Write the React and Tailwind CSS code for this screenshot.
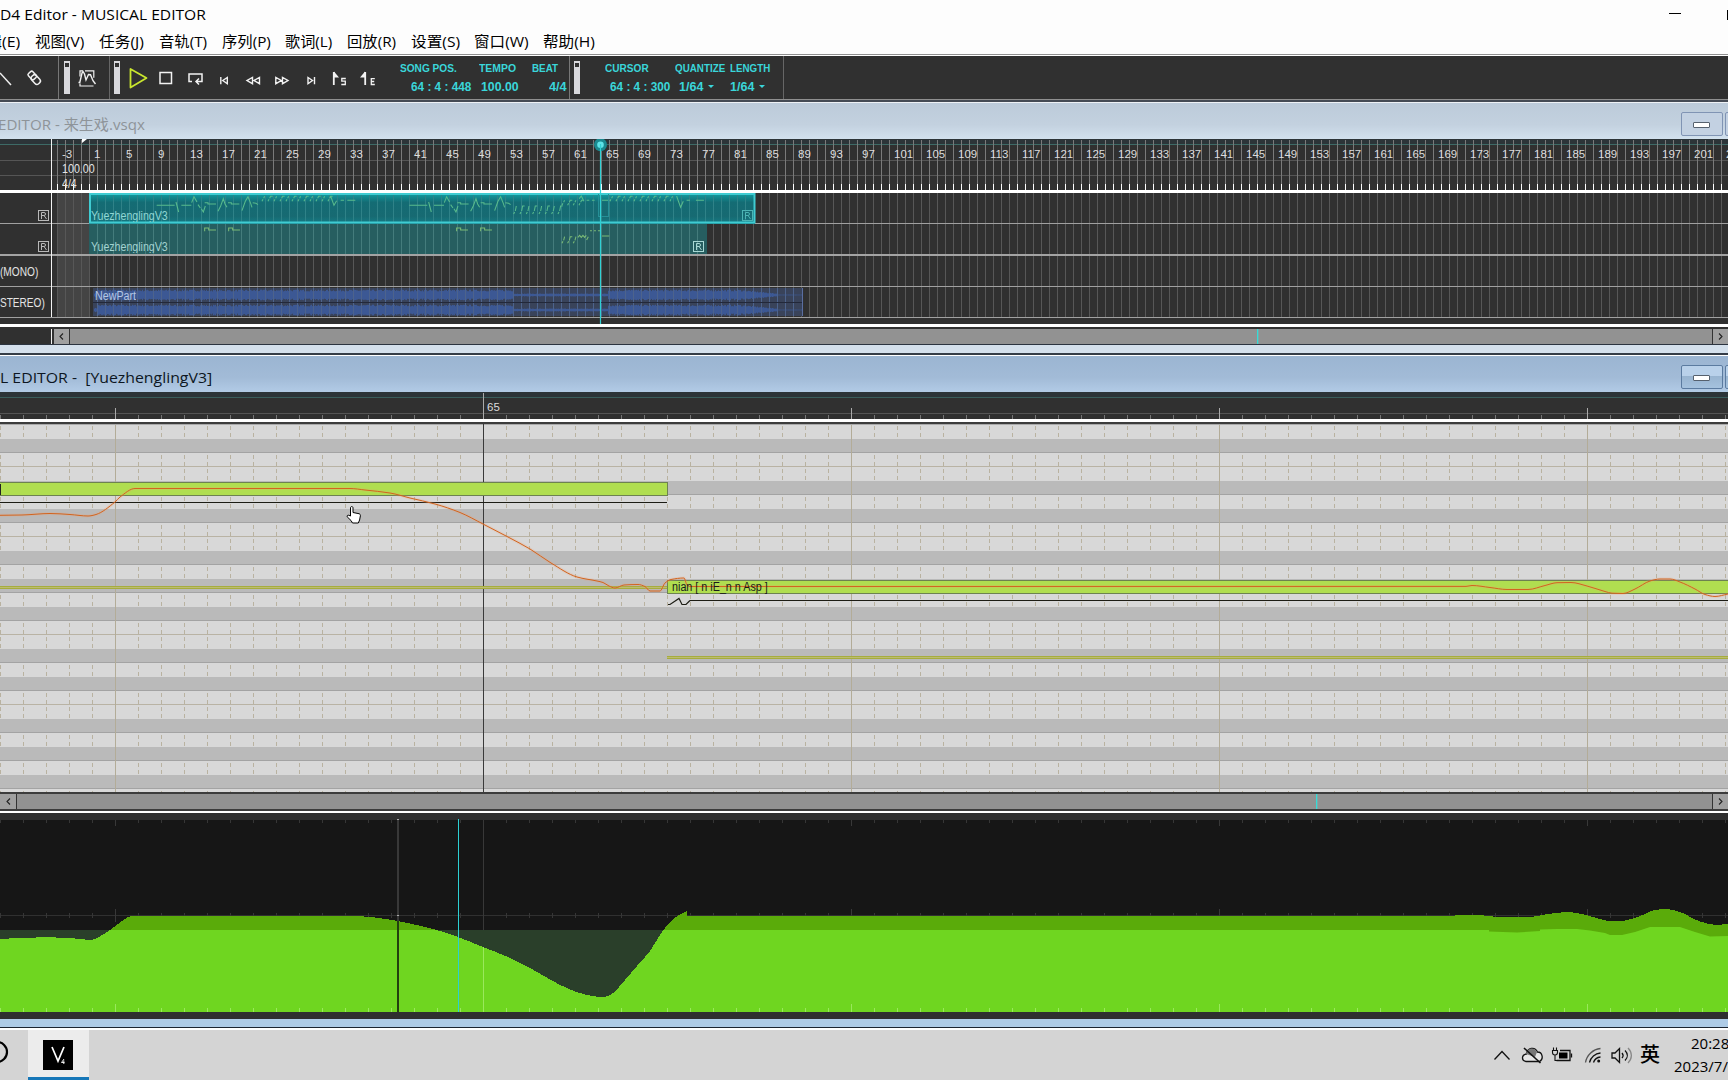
import React, { useLayoutEffect, useRef, useState } from "react";

/* Text squeezed or stretched horizontally to a given width. */
function Fit({ w, className = "", children }) {
  const ref = useRef(null);
  const [k, setK] = useState(1);
  useLayoutEffect(() => {
    setK(w / ref.current.offsetWidth);
  }, [w]);
  return (
    <span className={"block shrink-0 whitespace-nowrap " + className} style={{ width: w }}>
      <span ref={ref} className="inline-block origin-left" style={{ transform: `scaleX(${k})` }}>
        {children}
      </span>
    </span>
  );
}

const range = (a, b, s) => {
  const out = [];
  for (let i = a; i < b; i += s) out.push(i);
  return out;
};

/* Monotone cubic curve through a flat list x0,y0,x1,y1,... */
function curve(flat) {
  const p = [];
  for (let i = 0; i < flat.length; i += 2) p.push([flat[i], flat[i + 1]]);
  const s = p.slice(1).map((q, i) => (q[1] - p[i][1]) / (q[0] - p[i][0]));
  const m = p.map((_, i) => {
    if (i === 0) return s[0];
    if (i === p.length - 1) return s[i - 1];
    if (s[i - 1] * s[i] <= 0) return 0;
    return (2 * s[i - 1] * s[i]) / (s[i - 1] + s[i]);
  });
  let d = `${p[0][0]} ${p[0][1]}`;
  for (let i = 1; i < p.length; i++) {
    const h = (p[i][0] - p[i - 1][0]) / 3;
    d += `C${p[i - 1][0] + h} ${p[i - 1][1] + m[i - 1] * h} ${p[i][0] - h} ${p[i][1] - m[i] * h} ${p[i][0]} ${p[i][1]}`;
  }
  return d;
}

const UI = "font-['Open_Sans','Noto_Sans_CJK_SC',sans-serif]";
const SANS = "font-['Liberation_Sans','Noto_Sans_CJK_SC',sans-serif]";

const MENUS = [
  ["视图(V)", 49.5, 64],
  ["任务(J)", 45, 60],
  ["音轨(T)", 48, 63],
  ["序列(P)", 49, 63],
  ["歌词(L)", 47.5, 62],
  ["回放(R)", 49, 64],
  ["设置(S)", 49, 63],
  ["窗口(W)", 55, 69],
  ["帮助(H)", 52, 60],
];

function TitleBar() {
  return (
    <header className={"h-[56px] shrink-0 bg-[#fdfdfd] border-b border-white text-black " + UI}>
      <div className="h-[55px] border-b border-[#8f8f8f] flex flex-col">
        <div className="h-[30px] flex items-center justify-between text-[15px] leading-[28px]">
          <Fit w={206} className="pb-[2px]">D4 Editor - MUSICAL EDITOR</Fit>
          <div className="flex items-center">
            <span className="w-3 h-px bg-black mt-[-3px]" />
            <span className="w-px h-2.5 bg-black ml-[46px]" />
          </div>
        </div>
        <nav className="flex text-[15px] leading-[22px]">
          <div className="w-[35px] flex overflow-hidden">
            <span className="w-[20px] flex justify-end overflow-hidden">
              <Fit w={34}>辑(E)</Fit>
            </span>
          </div>
          {MENUS.map(([t, w, cell]) => (
            <div key={t} style={{ width: cell }}>
              <Fit w={w}>{t}</Fit>
            </div>
          ))}
        </nav>
      </div>
    </header>
  );
}

function Grip() {
  return (
    <div className="w-[6px] h-[33px] bg-[#d8d8dc] pt-[2px] flex justify-center shrink-0">
      <span className="w-1 h-1 bg-[#303030]" />
    </div>
  );
}

function Readout({ label, lw, value, vw, pad, width, arrow }) {
  return (
    <div className="h-[34px] flex flex-col justify-between shrink-0" style={{ width }}>
      <Fit w={lw} className="text-[11px] leading-[14px]">{label}</Fit>
      <div className="flex items-center gap-[5px] pb-[1px]" style={{ paddingLeft: pad }}>
        <Fit w={vw} className="text-[12px] leading-[14px]">{value}</Fit>
        {arrow && (
          <svg width="6" height="3" viewBox="0 0 6 3" fill="#3ad6da"><path d="M0 0h6L3 3z" /></svg>
        )}
      </div>
    </div>
  );
}

function Toolbar() {
  return (
    <div className="h-[43px] shrink-0 bg-[#303030] flex items-center">
      <svg className="shrink-0" width="58" height="43" viewBox="0 56 58 43" fill="none" stroke="#f0f0f0" strokeWidth="1.5">
        <path d="M0 73L11 85" />
        <rect x="-3.6" y="-3" width="8" height="6" rx="1.6" transform="translate(32 75.2) rotate(48)" />
        <rect x="-4.2" y="-3.2" width="10" height="6.4" rx="2.6" transform="translate(35.2 79) rotate(48)" />
      </svg>
      <span className="w-px h-full bg-[#777]" />
      <div className="w-[5px]" />
      <Grip />
      <svg className="shrink-0" width="39" height="43" viewBox="70 56 39 43" fill="none" stroke="#f0f0f0" strokeWidth="1.200">
        <path d="M80 76.500V70.800h3M85 70.800h8.800v7M80 83.500v2.500h13.500" />
        <path d="M78.500 82.500h1.300L82 73l1-1.500 1.500 2.500L86 80l2.500-5.500 2 .2 2.500 6 2.500 3.300" strokeWidth="1.400" />
      </svg>
      <span className="w-px h-full bg-[#666]" />
      <div className="w-[4px]" />
      <Grip />
      <svg className="shrink-0" width="280" height="43" viewBox="120 56 280 43" fill="none" stroke="#f2f2f2" strokeWidth="1.5">
        <path d="M130.500 69v18.500L146.500 78z" stroke="#c9e62e" strokeWidth="1.8" strokeLinejoin="round" />
        <rect x="160" y="72.500" width="11.500" height="11" />
        <path d="M192 81.500h-3v-7.500h13v7.500h-6M199 78.500l-3 3 3 3" />
        <g strokeWidth="1.400">
          <path d="M220.800 77v7.200M227.300 77.500v6.200L222.800 80.500z" />
          <path d="M252.500 77.500v6.200L247 80.500zM259.500 77.500v6.200L254 80.500z" />
          <path d="M275.800 77.500v6.200L281.300 80.500zM282.500 77.500v6.200L288 80.500z" />
          <path d="M314.500 77v7.200M308 77.500v6.200L312.500 80.500z" />
        </g>
        <path d="M333.800 72v13" strokeWidth="1.8" />
        <path d="M334 71.500l5 6h-5z" fill="#f2f2f2" stroke="none" />
        <path d="M345.800 78.500h-4v2.700h3.500v3.300h-4" strokeWidth="1.300" />
        <path d="M365.200 72v13" strokeWidth="1.8" />
        <path d="M365 71.500l-5 6h5z" fill="#f2f2f2" stroke="none" />
        <path d="M374.800 78.700h-3.500v5.800h3.500M371 81.500h3.200" strokeWidth="1.300" />
      </svg>
      <div className={"h-full flex items-center font-bold text-[#3ad6da] " + SANS}>
        <Readout label="SONG POS." lw={57} value="64 : 4 : 448" vw={60} pad={11} width={79} />
        <Readout label="TEMPO" lw={37} value="100.00" vw={38} pad={2} width={53} />
        <Readout label="BEAT" lw={26} value="4/4" vw={18} pad={17} width={37} />
        <span className="w-px h-full bg-[#777]" />
        <div className="w-[4px]" />
        <Grip />
        <div className="w-[25px]" />
        <Readout label="CURSOR" lw={44} value="64 : 4 : 300" vw={60} pad={5} width={70} />
        <Readout label="QUANTIZE" lw={50} value="1/64" vw={24} pad={4} width={55} arrow />
        <Readout label="LENGTH" lw={40} value="1/64" vw={24} pad={-1} width={53} arrow />
        <span className="w-px h-full bg-[#666]" />
      </div>
    </div>
  );
}

function WindowButtons({ active }) {
  const box = active
    ? "border-[#5b7ba0] bg-[linear-gradient(#b9d1ea_0_45%,#98b4d0_45%,#a5c2de)]"
    : "border-[#8094b4] bg-[#c3d1e2]";
  return (
    <div className="flex gap-[2px] overflow-hidden w-[47px]">
      <span className={"w-[42px] h-[24px] rounded-[2px] border shrink-0 flex items-center justify-center pt-[2px] pr-[2px] " + box}>
        <span className="w-[17px] h-[6px] rounded-[1px] border border-[#56616e] bg-white" />
      </span>
      <span className={"w-[42px] h-[24px] rounded-[2px] border shrink-0 " + box} />
    </div>
  );
}

function RBox({ color }) {
  return (
    <svg width="11" height="11" viewBox="0 0 11 11" fill="none" stroke={color} className="block shrink-0">
      <rect x=".5" y=".5" width="10" height="10" />
      <path d="M3.500 9V2.500h2.500a1.500 1.500 0 0 1 0 3H3.500M6 5.500L8.500 9" />
    </svg>
  );
}

/* Note strokes of the vocal parts, in thirds of a pixel. */
const phrase = (o) =>
  `M${o + 200} 46h54M${o + 258} 36l8 30M${o + 274} 46h30M${o + 305} 38l7-18 9 16M${o + 324} 44l7 10M${o + 334} 56l6 10 6-18M${o + 344} 38h10v4h24M${o + 384} 64l8-16 8-22 5 16 6 10M${o + 414} 38h10v4h24M${o + 456} 62l10-28 8-14 8 20 4 12M${o + 488} 38l10 2 6 4`;
const slants = (a, b, step, y0, y1) =>
  range(a, b, step).map((x, i) => `M${x} ${y0}l3 -6M${x + 5} ${y0 - 9}l3 ${-(y0 - y1 - 11)}${i % 2 ? "h6" : ""}`).join("");
const PART1 =
  phrase(0) + phrase(758) +
  slants(516, 720, 18, 34, 17) + "M722 18l10 28 8-14M752 31h10M772 31h24" +
  slants(1271, 1410, 19, 72, 46) + slants(1416, 1470, 17, 46, 29) + "M1468 26l6-8 8 16M1490 31h8M1506 31h8M1536 31h22" +
  slants(1560, 1756, 18, 34, 17) + "M1760 18l12 34 8-18M1790 31h10M1818 31h24";
const PART2 =
  "M344 124v-10h12v6h22M416 124v-10h12v6h22M1100 124v-10h12v6h22M1172 124v-10h12v6h22" +
  slants(1416, 1464, 17, 160, 138) + "M1464 142l5-6 5 6 5-6 5 6 5-6M1490 150l5-10M1500 122h6M1512 122h6M1524 122h8M1536 138h22";

function wavePath(cy) {
  let seed = 7;
  const rnd = () => (seed = (seed * 16807) % 2147483647) / 2147483647;
  let d = "";
  for (let x = 94; x < 802; x++) {
    let a = 5;
    if (x < 98) a = 2;
    else if (x > 512 && x < 608) a = 1.4;
    else if (x > 777) a = 0.4;
    else if (x > 740) a = 5 - ((x - 740) / 37) * 3.6;
    const h = a * (0.72 + rnd() * 0.35);
    d += `M${x + 0.5} ${cy - h}v${2 * h}`;
  }
  return d;
}

function BarNumbers() {
  const bars = [-3];
  for (let b = 1; b <= 205; b += 4) bars.push(b);
  return (
    <div className={"h-[21px] flex pl-[10px] pt-[8px] text-[11.5px] leading-[14px] text-[#dcdcdc] overflow-hidden " + SANS}>
      {bars.map((b) => (
        <span key={b} className="shrink-0 w-[32px]">
          {b}
        </span>
      ))}
    </div>
  );
}

function Arrange() {
  const ticks = range(57, 1728, 8);
  return (
    <section className="relative h-[185px] shrink-0 bg-[#303030] overflow-hidden">
      <svg className="absolute inset-0" width="1728" height="185" viewBox="0 139 1728 185" shapeRendering="crispEdges">
        <rect x="0" y="139" width="1728" height="5" fill="#2c3438" />
        <rect x="0" y="144" width="1728" height="1" fill="#3d6a66" />
        <path d="M0 160.500H1728M0 175.500H1728" stroke="#555" />
        <path d={ticks.map((x) => `M${x + 0.5} 140V190`).join("")} stroke="#7a7a7a" />
        <path d={ticks.map((x) => `M${x + 0.5} 184V190`).join("")} stroke="#fff" />
        <path d="M82 139h5l-5 4z" fill="#fff" shapeRendering="auto" />
        <rect x="57" y="193" width="32" height="124" fill="#444" />
        <path d={ticks.map((x) => `M${x + 0.5} 193V317`).join("")} stroke="#575757" />
        <path d="M0 223.500H1728M0 286.500H1728M0 317.500H1728" stroke="#a0a0a0" />
        <rect x="0" y="254" width="1728" height="2" fill="#a3a3a3" />
        <defs>
          <linearGradient id="sel" x1="0" y1="0" x2="0" y2="1">
            <stop offset="0" stopColor="#12a0a4" />
            <stop offset=".3" stopColor="#146c74" />
            <stop offset=".75" stopColor="#176a72" />
            <stop offset="1" stopColor="#147c86" />
          </linearGradient>
        </defs>
        <rect x="89" y="193" width="666" height="31" fill="url(#sel)" />
        <rect x="89" y="224" width="618" height="30" fill="#265e60" />
        <path d={range(97, 753, 8).map((x) => `M${x + 0.5} 195V222`).join("")} stroke="#2f8288" />
        <path d={range(97, 705, 8).map((x) => `M${x + 0.5} 224V254`).join("")} stroke="#447c7c" />
        <rect x="90" y="194" width="664.500" height="28.500" fill="none" stroke="#40ccd2" strokeWidth="2" shapeRendering="auto" />
        <rect x="93" y="288" width="710" height="28" fill="#39435a" />
        <path d={wavePath(295) + wavePath(310)} stroke="#3c5894" shapeRendering="auto" />
        <path d={range(97, 800, 8).map((x) => `M${x + 0.5} 288V316`).join("")} stroke="#4d638c" />
        <path d="M93 302.500H802" stroke="#22283a" />
        <path d="M802.500 288V316" stroke="#5a6ea0" />
        <g transform="translate(90 190) scale(.3333)" fill="none" strokeWidth="3.200" shapeRendering="auto">
          <path d={PART1} stroke="#58ba8c" />
          <path d={PART2} stroke="#7aba76" />
        </g>
        <path d="M598.500 194v22h10v-22" fill="none" stroke="#268f96" />
      </svg>
      <div className="relative h-full flex text-[#e4e4e4]">
        <div className={"w-[52px] border-r border-[#f2f2f2] h-[178px] flex flex-col text-[12px] leading-[34px] shrink-0 " + SANS}>
          <div className="h-[54px]" />
          <div className="h-[31px] pl-[38px] pt-[17px]"><RBox color="#b8b8b8" /></div>
          <div className="h-[31px] pl-[38px] pt-[17px]"><RBox color="#b8b8b8" /></div>
          <div className="h-[31px]"><Fit w={38}>(MONO)</Fit></div>
          <div className="h-[31px]"><Fit w={44.5}>STEREO)</Fit></div>
        </div>
        <div className={"grow min-w-0 text-[12px] " + SANS}>
          <BarNumbers />
          <Fit w={33} className="h-[15px] leading-[18px] ml-[10px]">100.00</Fit>
          <Fit w={15} className="h-[15px] leading-[18px] ml-[10px] overflow-hidden">4/4</Fit>
          <div className="h-[3px] bg-white -ml-[52px]" />
          <div className="h-[30px] pl-[39px] pt-[14px] flex text-[#8fd6d4] w-[701px]">
            <Fit w={77} className="h-[15px] leading-[18px] overflow-hidden">YuezhenglingV3</Fit>
            <div className="ml-auto mt-[3px]"><RBox color="#4cb4b4" /></div>
          </div>
          <div className="h-[31px] pl-[39px] pt-[15px] flex text-[#a3d2d0] w-[655px]">
            <Fit w={77} className="h-[15px] leading-[18px] overflow-hidden">YuezhenglingV3</Fit>
            <div className="ml-auto mt-[3px] mr-[3px]"><RBox color="#a8d8d4" /></div>
          </div>
          <div className="h-[31px]" />
          <Fit w={41} className="ml-[43px] mt-[3px] leading-[16px] text-[#b4c6e4]">NewPart</Fit>
        </div>
      </div>
      <svg className="absolute left-[590px] top-0" width="22" height="185" viewBox="590 139 22 185">
        <circle cx="600.500" cy="144.700" r="6.500" fill="#1b8a90" />
        <circle cx="600.500" cy="144.700" r="3.300" fill="#5fe4e8" />
        <path d="M600.500 144V324" stroke="#2fd0d4" strokeWidth="1.200" />
      </svg>
    </section>
  );
}

function Arrow({ d }) {
  return (
    <svg width="5" height="7" viewBox="0 0 5 7" fill="none" stroke="#222" strokeWidth="1.100"><path d={d} /></svg>
  );
}
const LEFT = "M4 .5L1 3.500L4 6.500";
const RIGHT = "M1 .5L4 3.500L1 6.500";

function ScrollBar({ leftW, before, cls }) {
  return (
    <div className={"h-[15px] flex grow " + cls}>
      <span className="bg-[#a0a0a0] border-r border-[#333] flex items-center justify-center shrink-0" style={{ width: leftW }}>
        <Arrow d={LEFT} />
      </span>
      <span className="bg-[#929292] shrink-0" style={{ width: before }} />
      <span className="w-px bg-[#35dcd8] shrink-0" />
      <span className="w-px bg-[#78aaa8] shrink-0" />
      <span className="bg-[#929292] grow" />
      <span className="w-[16px] bg-[#a0a0a0] border-l border-[#333] flex items-center justify-center shrink-0">
        <Arrow d={RIGHT} />
      </span>
    </div>
  );
}

const PITCH =
  "M" +
  curve([0, 515.3, 22, 515, 50, 513.5, 70, 514.5, 88, 516, 96, 514.5, 115, 502, 120, 497, 135, 488.5, 350, 488.5, 365, 490, 390, 493, 410, 498, 435, 504, 460, 512.5, 483, 524, 508, 537, 530, 549, 551, 563, 577, 577, 597, 581, 603, 582.5, 609, 586, 615, 588, 624, 585, 638, 584.5, 645, 586.5, 650, 591, 660, 591, 665, 583, 671, 579.5, 684, 578, 687, 585, 690, 586.5, 1466, 586.4, 1472, 585.5, 1490, 587.5, 1507, 589.5, 1528, 589.5, 1545, 585.5, 1557, 582.7, 1571, 582.5, 1587, 586, 1605, 591.5, 1612, 593.2, 1623, 593.5, 1635, 589, 1650, 581, 1660, 579, 1670, 579, 1680, 582, 1695, 589, 1705, 594.5, 1715, 596.5, 1728, 594]);

const ROWS = "DLLDLDLLDLDLDLLDLDLLDLDLDL".split("");

function PianoRoll() {
  const minor = range(0, 1728, 23).filter((x) => (x - 115) % 368 !== 0);
  const majors = [115, 851, 1219, 1587];
  return (
    <>
      <div className={"relative h-[27px] shrink-0 bg-[#303030] overflow-hidden " + SANS}>
        <svg className="absolute inset-0" width="1728" height="27" viewBox="0 392 1728 27" shapeRendering="crispEdges">
          <rect x="0" y="392" width="1728" height="5" fill="#2c3438" />
          <path d="M0 397.500H1728" stroke="#3a5e5c" />
          <path d="M0 413.500H1728" stroke="#555" />
          <path d={minor.map((x) => `M${x + 0.5} 415V419`).join("")} stroke="#777" />
          <path d={majors.map((x) => `M${x + 0.5} 408V419`).join("") + "M483.500 393V419"} stroke="#aaa" />
        </svg>
        <span className="relative block pl-[487px] pt-[8px] text-[11.5px] leading-[14px] text-[#dcdcdc]">65</span>
      </div>
      <div className="h-[3px] bg-white shrink-0" />
      <div className="h-[2px] bg-[#3c3c3c] shrink-0" />
      <section className="relative h-[368px] shrink-0 bg-[#d8d8d8] overflow-hidden">
        <div className="h-[15px] border-t border-[#aaa]" />
        {ROWS.map((r, i) => (
          <div
            key={i}
            className={
              r === "D"
                ? "h-[14px] bg-[#bababa] border-b border-[#a3a3a3]"
                : "h-[14px] bg-[#d8d8d8] " + (ROWS[i + 1] === "L" ? "border-b border-[#b9b3a4]" : "")
            }
          />
        ))}
        <svg className="absolute inset-0" width="1728" height="368" viewBox="0 424 1728 368" shapeRendering="crispEdges">
          {ROWS.map((r, i) =>
            r === "L" ? (
              <path key={i} d={minor.map((x) => `M${x + 0.5} ${439 + 14 * i + 2}V${453 + 14 * i - 1}`).join("")} stroke="#b9b2a0" strokeDasharray="4 3" />
            ) : null
          )}
          <path d={minor.map((x) => `M${x + 0.5} 426V438`).join("")} stroke="#b9b2a0" strokeDasharray="4 3" />
          <path d={majors.map((x) => `M${x + 0.5} 425V792`).join("")} stroke="#b3ac98" />
          <path d="M483.500 424V792" stroke="#3a3a3a" />
          <rect x="0" y="586" width="667" height="3" fill="#bcbc70" />
          <path d="M0 586.500H667M0 588.500H667" stroke="#a6ac3e" />
          <rect x="667" y="656" width="1061" height="3" fill="#bcbc70" />
          <path d="M667 656.500H1728M667 658.500H1728" stroke="#a6ac3e" />
          <rect x="-1.500" y="482.500" width="669" height="13" fill="#b0de50" stroke="#6d8250" />
          <rect x="0" y="484" width="1" height="11" fill="#222" />
          <rect x="667.500" y="580.500" width="1070" height="13" fill="#b0de50" stroke="#6d8250" />
          <path d="M0 502.500H667M690 600.500H1728" stroke="#1c1c14" />
          <path d="M668 604.500h2L679 598.500L682 604.500h4L690 600.500" fill="none" stroke="#1c1c14" strokeWidth="1.200" shapeRendering="auto" />
          <path d={PITCH} fill="none" stroke="#f0a070" strokeWidth="3" opacity=".22" shapeRendering="auto" />
          <path d={PITCH} fill="none" stroke="#d2641e" strokeWidth="1" shapeRendering="auto" />
        </svg>
        <div className={"absolute left-[672px] top-[156px] text-[12px] leading-[14px] text-[#1a1a1a] " + SANS}>
          <Fit w={96}>nian [ n iE_n n Asp ]</Fit>
        </div>
        <svg className="absolute left-[346px] top-[82px]" width="16" height="18" viewBox="0 0 16 18">
          <path d="M4.500 10V2c0-2 2.500-2 2.500 0v4.500l6 1.200c1 .3 1.500 1 1.400 2l-.8 4.300-1.300 3H6.500L5 14.500 1.200 10.800c-.6-1 .6-2 1.600-1.500z" fill="#fff" stroke="#000" />
        </svg>
      </section>
    </>
  );
}

const LEVEL =
  "M0 1012L" +
  curve([0, 939, 20, 938, 50, 937.3, 75, 938.5, 91, 940, 98, 937.5, 110, 930, 134, 915.5, 345, 915.5, 375, 917.5, 400, 921.5, 435, 929.5, 458, 937, 483, 947, 508, 957, 530, 968, 550, 979.5, 570, 989.5, 585, 994.5, 600, 997, 607, 996.3, 613, 993, 625, 980, 637, 966, 650, 951, 660, 935, 670, 922, 680, 914.5, 687, 911]) +
  "L" +
  curve([687.1, 915.5, 1455, 915.5, 1475, 915, 1490, 916, 1500, 917.3, 1527, 917.5, 1545, 914.5, 1567, 912, 1582, 914, 1600, 919, 1613, 921.5, 1623, 921, 1640, 916, 1655, 910, 1667, 909, 1680, 912, 1700, 921.5, 1717, 925, 1728, 923.5]) +
  "V1012Z";
const BASE =
  "M0 1012V930H1489V931.5L1517 932.5L1540 931V929.500L1557 929H1577L1590 930.5L1605 933L1610 935H1622L1635 932L1650 927H1680L1695 932L1710 936.5L1728 936V1012Z";

function ParameterPane() {
  const minor = range(0, 1728, 23);
  const majors = [115, 851, 1219, 1587];
  return (
    <section className="h-[208px] shrink-0 bg-[#2f2f2f] border-b-[7px] border-[#2f2f2f]">
      <svg className="block" width="1728" height="201" viewBox="0 811 1728 201" shapeRendering="crispEdges">
        <defs><clipPath id="base"><path d={BASE} /></clipPath></defs>
        <rect x="0" y="811" width="1728" height="2" fill="#fff" />
        <rect x="0" y="820" width="1728" height="192" fill="#161616" />
        <path d="M0 915.500H1728" stroke="#303030" />
        <path d={minor.map((x) => `M${x + 0.5} 820V823M${x + 0.5} 913V918`).join("")} stroke="#363636" />
        <path d={majors.map((x) => `M${x + 0.5} 820V826M${x + 0.5} 909V922`).join("") + "M483.500 820V1012"} stroke="#383838" />
        <path d={BASE} fill="#2a3f2a" />
        <path d={LEVEL} fill="#5aab0a" />
        <path d={LEVEL} fill="#6fd620" clipPath="url(#base)" />
        <path d={minor.map((x) => `M${x + 0.5} 1008V1012`).join("") + majors.map((x) => `M${x + 0.5} 1004V1012`).join("") + "M483.500 947V1012"} stroke="#9ae85c" />
        <rect x="397" y="819" width="2" height="193" fill="#383838" />
        <rect x="397" y="921" width="2" height="91" fill="#23400f" />
        <path d="M397 819.500h2M397 915.500h2" stroke="#aaa" />
        <path d="M458.500 819V1012" stroke="#2cd0d4" />
      </svg>
    </section>
  );
}

function Taskbar() {
  return (
    <footer className={"h-[50px] shrink-0 bg-[#d4d4d4] flex text-black " + UI}>
      <svg className="shrink-0" width="28" height="50" viewBox="0 1030 28 50" fill="none" stroke="#000" strokeWidth="2.200">
        <circle cx="-3" cy="1052" r="10" />
      </svg>
      <div className="w-[61px] bg-[#ececec] border-b-[3px] border-[#1677b8] flex pl-[15px] pt-[10px] shrink-0">
        <svg width="30" height="30" viewBox="0 0 30 30" fill="none" stroke="#fff">
          <rect width="30" height="30" fill="#000" stroke="none" />
          <path d="M9 7l6 14 6-14" strokeWidth="1.700" />
          <path d="M21 19l-2.500 3.500h3M20.800 20.500v3.500" strokeWidth=".9" />
        </svg>
      </div>
      <div className="ml-auto flex">
        <svg width="144" height="50" viewBox="1492 1030 144 50" fill="none" stroke="#111" strokeWidth="1.300">
          <path d="M1494.500 1059.500l7.500-8 7.500 8" />
          <path d="M1526 1061.500c-5-1-4.500-7 .5-7.500 1-6 8-8 11-2 5 0 6.500 7 2 9.500z" fill="#e6e6e6" />
          <path d="M1526 1054c1-6 8-8 11-2l-2 5z" fill="#777" stroke="none" />
          <path d="M1524 1048l16.500 15" strokeWidth="1.600" />
          <path d="M1560 1050.500h10v10H1556.500" />
          <path d="M1571.500 1053.500v4" />
          <rect x="1559" y="1052.500" width="8.500" height="6" fill="#000" stroke="none" />
          <path d="M1553.500 1047.500v3M1556.500 1047.500v3M1552.500 1050.500h5v2c0 1.500-1 2.500-2.500 2.500s-2.500-1-2.500-2.500zM1555 1055v5.500h2.500" strokeWidth="1.100" />
          <path d="M1585.500 1062.500a17 17 0 0 1 15-14" stroke="#555" />
          <path d="M1589.500 1062.500a12 12 0 0 1 11-9.500M1593.500 1062.500a8 8 0 0 1 7-5.500" />
          <circle cx="1598.700" cy="1061" r="1.500" fill="#111" stroke="none" />
          <path d="M1612 1053h3l4.500-4.500v14L1615 1058h-3z" />
          <path d="M1622 1053c1.300 1.500 1.300 3.500 0 5M1625 1050.500c3 3 3 7 0 10" />
          <path d="M1628 1048c4.500 4.500 4.500 10.500 0 15" stroke="#888" />
        </svg>
        <span className="w-[26px] pl-[4px] text-[20px] leading-[49px] font-medium overflow-visible whitespace-nowrap">英</span>
        <div className="w-[66px] pl-[12px] pt-[2px] text-[15px] leading-[23px] overflow-hidden">
          <div className="pl-[17px]"><Fit w={38}>20:28</Fit></div>
          <Fit w={54}>2023/7/</Fit>
        </div>
      </div>
    </footer>
  );
}

export default function App() {
  return (
    <div className="w-[1728px] h-[1080px] flex flex-col overflow-hidden bg-[#303030]">
      <TitleBar />
      <Toolbar />
      <div className="h-px bg-[#8f8f8f] shrink-0" />
      <div className="h-[2px] bg-[#454b55] shrink-0" />
      <div className={"h-[37px] shrink-0 border-t border-[#eef2f6] bg-[linear-gradient(#bccbda,#c3d1df_60%,#d2e1ee)] flex items-center justify-between " + UI}>
        <Fit w={147} className="text-[15px] leading-[20px] text-[#8e9499] pt-[6px] -ml-[2px]">EDITOR - 来生戏.vsqx</Fit>
        <div className="pt-[6px]"><WindowButtons /></div>
      </div>
      <Arrange />
      <div className="h-[3px] bg-white shrink-0" />
      <div className="h-[17px] bg-[#303030] pt-[2px] flex shrink-0">
        <span className="w-[52px] border-r border-[#f2f2f2] shrink-0" />
        <ScrollBar leftW={16} before={1187} cls="ml-[2px]" />
      </div>
      <div className="h-[9px] bg-[#d4e0ec] border-t border-[#2c3440] shrink-0" />
      <div className="h-[2px] bg-[#343c46] shrink-0" />
      <div className={"h-[37px] shrink-0 border-t border-white bg-[linear-gradient(#9bb5d2,#a2bbd7_60%,#b2cbe6)] flex items-center justify-between " + UI}>
        <Fit w={212} className="text-[15px] leading-[20px] text-[#0c1622] pt-[6px]">L EDITOR -&nbsp; [YuezhenglingV3]</Fit>
        <div className="pt-[6px]"><WindowButtons active /></div>
      </div>
      <PianoRoll />
      <div className="h-[19px] bg-[#3c3c3c] py-[2px] flex shrink-0">
        <ScrollBar leftW={17} before={1299} cls="" />
      </div>
      <ParameterPane />
      <div className="h-[8px] bg-[#aecbe6] shrink-0" />
      <div className="h-px bg-[#1c2430] shrink-0" />
      <div className="h-[2px] bg-white shrink-0" />
      <Taskbar />
    </div>
  );
}
